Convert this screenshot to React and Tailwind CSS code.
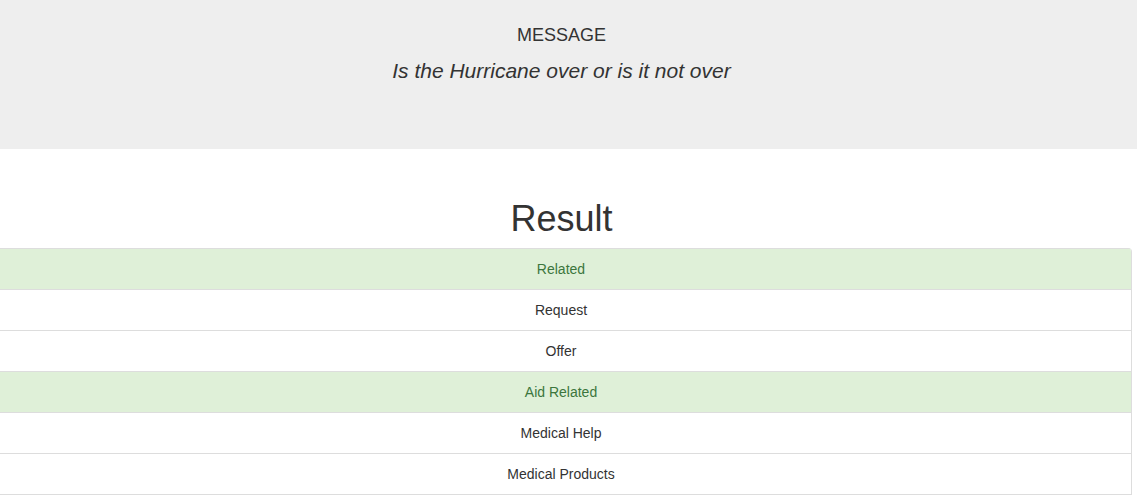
const categories = [
  { name: "Related", hit: true },
  { name: "Request", hit: false },
  { name: "Offer", hit: false },
  { name: "Aid Related", hit: true },
  { name: "Medical Help", hit: false },
  { name: "Medical Products", hit: false },
];

export default function App() {
  return (
    <div className="min-h-screen overflow-x-hidden bg-white text-[#333] font-['Liberation_Sans',Arial,sans-serif] text-[14px] leading-[20px]">
      <div className="h-[149px] bg-[#eeeeee]">
        <div className="w-[1141px] -ml-[9px] pt-[26px] text-center">
          <h3 className="text-[18px] leading-[1.1]">MESSAGE</h3>
          <p className="mt-[13px] text-[21px] leading-[1.1] italic">Is the Hurricane over or is it not over</p>
        </div>
      </div>

      <div className="w-[1141px] -ml-[9px] pt-[50px]">
        <h1 className="text-center text-[36px] leading-[1.1] mb-[9px]">Result</h1>
        <ul className="border-r border-b border-[#ddd] rounded-t-[4px] overflow-hidden">
          {categories.map((c) => (
            <li
              key={c.name}
              className={
                "h-[41px] border-t border-[#ddd] flex items-center justify-center " +
                (c.hit ? "bg-[#dff0d8] text-[#3c763d]" : "bg-white text-[#333]")
              }
            >
              {c.name}
            </li>
          ))}
        </ul>
      </div>
    </div>
  );
}
